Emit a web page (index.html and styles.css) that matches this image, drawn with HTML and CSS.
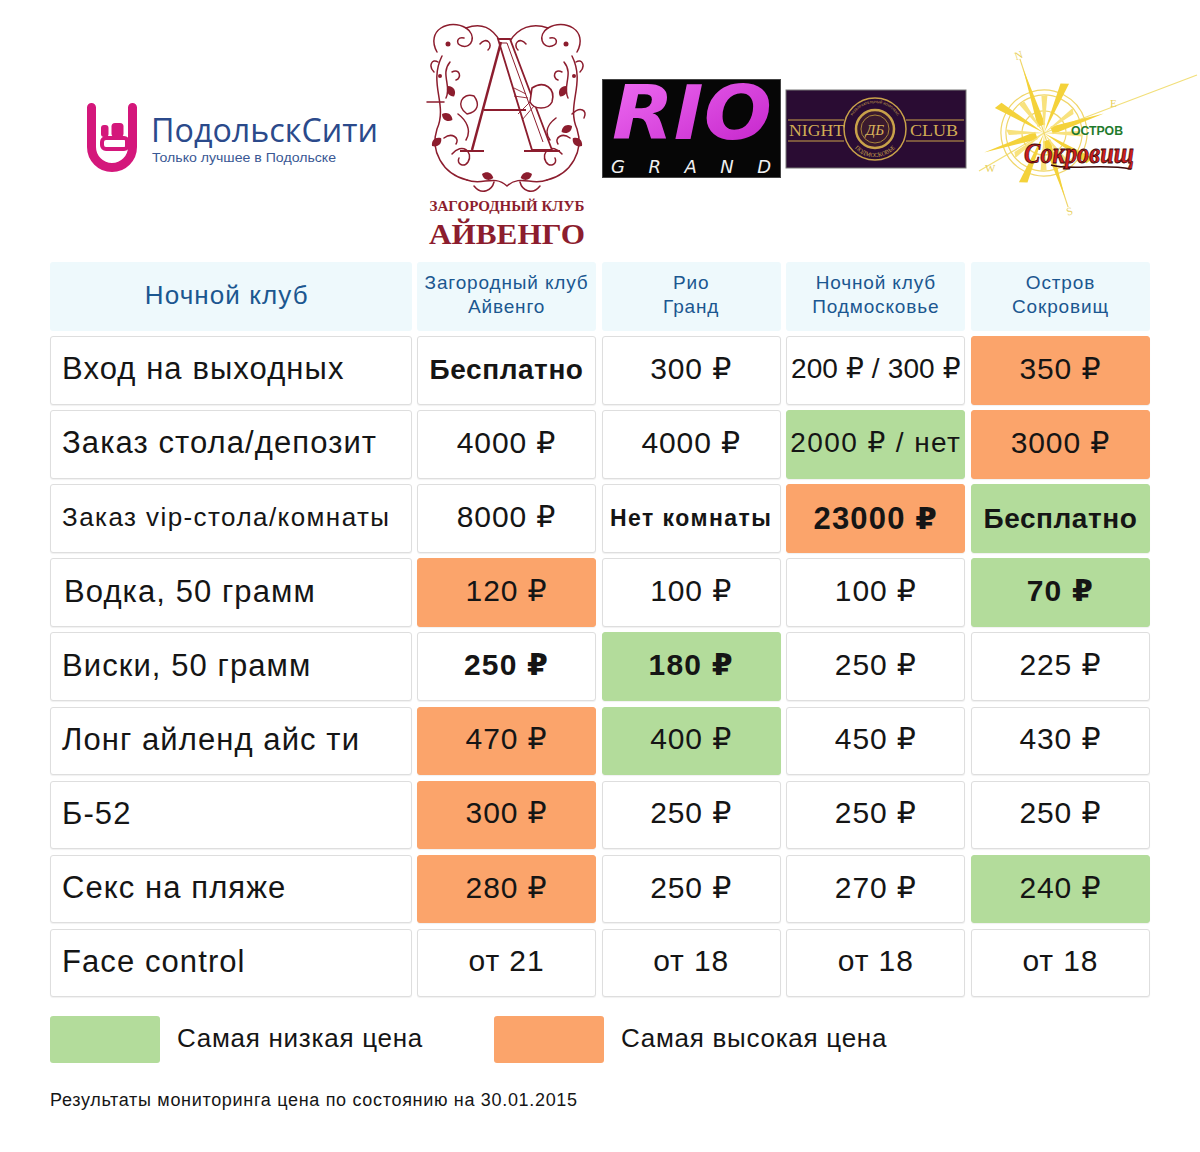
FILE: index.html
```html
<!DOCTYPE html>
<html lang="ru">
<head>
<meta charset="utf-8">
<title>Сравнение ночных клубов</title>
<link rel="stylesheet" href="styles.css">
</head>
<body>
<div class="page">
  <div class="logos">
    <div class="logo logo-podolsk">
      <svg width="300" height="75" viewBox="0 0 300 75">
        <g transform="translate(3,3)" fill="none" stroke="#d4177b">
          <path d="M4.5 4.5 V44 A20.5 20.5 0 0 0 45.5 44 V4.5" stroke-width="9" stroke-linecap="round"/>
          <rect x="15" y="35" width="26" height="11" rx="4" stroke-width="4" fill="#fff"/>
        </g>
        <g transform="translate(3,3)" fill="#d4177b">
          <rect x="14" y="22" width="7.5" height="12" rx="3"/>
          <rect x="24.5" y="20" width="12" height="14" rx="3.5"/>
          <rect x="38" y="35" width="6" height="11"/>
        </g>
        <text x="67" y="42" class="pd-title" textLength="227" lengthAdjust="spacingAndGlyphs">ПодольскСити</text>
        <text x="68" y="62" class="pd-sub" textLength="184" lengthAdjust="spacingAndGlyphs">Только лучшее в Подольске</text>
      </svg>
    </div>
    <div class="logo logo-ivanhoe">
      <svg width="170" height="236" viewBox="0 0 170 236">
        <defs>
          <path id="leaf" d="M0 0 C3 -5 9 -5 12 0 C9 5 3 5 0 0 Z"/>
        </defs>
        <g fill="none" stroke="#8c1d2e" stroke-width="1.5" stroke-linecap="round">
          <path d="M15 38 C3 16 28 4 44 14 C55 21 50 35 40 32 C33 30 35 22 42 24"/>
          <path d="M155 38 C167 16 142 4 126 14 C115 21 120 35 130 32 C137 30 135 22 128 24"/>
          <path d="M44 14 C60 8 70 14 78 27"/>
          <path d="M126 14 C110 8 96 14 88 27"/>
          <path d="M58 30 C64 22 72 30 66 36 M104 30 C98 22 90 30 96 36"/>
          <path d="M20 42 C6 70 26 90 15 115 C8 136 20 160 45 166"/>
          <path d="M150 42 C164 70 144 90 155 115 C162 136 150 160 125 166"/>
          <path d="M28 48 C18 60 30 72 24 84 M30 58 C38 54 40 64 34 66"/>
          <path d="M142 48 C152 60 140 72 146 84 M140 58 C132 54 130 64 136 66"/>
          <path d="M12 58 C6 52 10 44 16 48 M158 58 C164 52 160 44 154 48"/>
          <path d="M45 166 C60 172 72 160 85 172 C98 160 110 172 125 166"/>
          <path d="M30 140 C40 128 52 138 46 148 C42 154 34 150 37 144"/>
          <path d="M140 140 C130 128 118 138 124 148 C128 154 136 150 133 144"/>
          <path d="M22 124 C30 118 38 124 34 130 M148 124 C140 118 132 124 136 130"/>
          <path d="M52 172 C60 182 70 176 72 168 M118 172 C110 182 100 176 98 168"/>
          <path d="M5 88 L22 88"/>
          <path d="M150 100 C158 92 166 96 162 104"/>
          <path d="M36 100 C44 106 50 116 44 126 M134 104 C126 110 122 118 128 126"/>
        </g>
        <g fill="#8c1d2e">
          <use href="#leaf" transform="translate(26 72) rotate(60)"/>
          <use href="#leaf" transform="translate(144 72) rotate(120)"/>
          <use href="#leaf" transform="translate(20 100) rotate(30)"/>
          <use href="#leaf" transform="translate(150 112) rotate(150)"/>
          <use href="#leaf" transform="translate(10 132) rotate(-40)"/>
          <use href="#leaf" transform="translate(160 132) rotate(220)"/>
          <use href="#leaf" transform="translate(60 160) rotate(20)"/>
          <use href="#leaf" transform="translate(110 160) rotate(160)"/>
          <circle cx="26" cy="30" r="2.5"/>
          <circle cx="144" cy="30" r="2.5"/>
          <circle cx="18" cy="62" r="2"/>
          <circle cx="152" cy="62" r="2"/>
        </g>
        <path d="M45 100 C33 92 40 78 52 82 C58 90 56 98 45 100 Z" fill="#fff" stroke="#8c1d2e" stroke-width="1.4"/>
        <path d="M76 25 L88 25 L130 136 L110 136 Z" fill="#fff" stroke="#8c1d2e" stroke-width="1.8"/>
        <path d="M80 29 L85 29 L121 128" stroke="#8c1d2e" stroke-width="1" fill="none"/>
        <path d="M79 28 L50 136" stroke="#8c1d2e" stroke-width="2.5" fill="none"/>
        <path d="M62 96 L104 96" stroke="#8c1d2e" stroke-width="2" fill="none"/>
        <path d="M38 137 L62 137 M102 137 L138 137" stroke="#8c1d2e" stroke-width="2.2" fill="none"/>
        <path d="M110 74 C122 66 134 74 130 88 C126 96 112 96 108 88 Z" fill="#fff" stroke="#8c1d2e" stroke-width="1.6"/>
        <path d="M108 88 L96 100 M112 92 L100 106 M104 80 L92 74 M106 84 L92 82" stroke="#8c1d2e" stroke-width="0.9" fill="none"/>
        <text x="85" y="197" class="iv-sub" text-anchor="middle" textLength="155" lengthAdjust="spacingAndGlyphs">ЗАГОРОДНЫЙ КЛУБ</text>
        <text x="85" y="230" class="iv-title" text-anchor="middle" textLength="156" lengthAdjust="spacingAndGlyphs">АЙВЕНГО</text>
      </svg>
    </div>
    <div class="logo logo-rio">
      <svg width="179" height="99" viewBox="0 0 179 99">
        <defs>
          <linearGradient id="rioG" x1="0" y1="0" x2="1" y2="1">
            <stop offset="0" stop-color="#f070f4"/>
            <stop offset="1" stop-color="#c21fc8"/>
          </linearGradient>
        </defs>
        <rect x="0.5" y="0.5" width="178" height="98" fill="#060606" stroke="#444"/>
        <text x="10" y="60" class="rio-title" fill="url(#rioG)" textLength="160" lengthAdjust="spacingAndGlyphs">RIO</text>
        <text x="9" y="94" class="rio-sub" textLength="160" lengthAdjust="spacing">GRAND</text>
      </svg>
    </div>
    <div class="logo logo-night">
      <svg width="180" height="78" viewBox="0 0 180 78">
        <defs>
          <path id="arcTop" d="M63 39 A26 26 0 0 1 115 39"/>
          <path id="arcBot" d="M62 40 A27 27 0 0 0 116 40"/>
        </defs>
        <rect x="0" y="0" width="180" height="78" fill="#2a0c33" stroke="#777" stroke-width="1"/>
        <g stroke="#c9a24a" stroke-width="1.2">
          <line x1="2" y1="30" x2="58" y2="30"/>
          <line x1="2" y1="51" x2="58" y2="51"/>
          <line x1="120" y1="30" x2="178" y2="30"/>
          <line x1="120" y1="51" x2="178" y2="51"/>
        </g>
        <circle cx="89" cy="39" r="31" fill="#2a0c33" stroke="#c9a24a" stroke-width="1.5"/>
        <circle cx="89" cy="39" r="19" fill="#3a1a2e" stroke="#c9a24a" stroke-width="2.5"/>
        <circle cx="89" cy="39" r="14" fill="none" stroke="#a8843a" stroke-width="1"/>
        <text class="nc-small"><textPath href="#arcTop" startOffset="50%" text-anchor="middle">РАЗВЛЕКАТЕЛЬНЫЙ КОМПЛЕКС</textPath></text>
        <text class="nc-small2"><textPath href="#arcBot" startOffset="50%" text-anchor="middle">ПОДМОСКОВЬЕ</textPath></text>
        <text x="89" y="45" class="nc-mono" text-anchor="middle">ДБ</text>
        <text x="3" y="46" class="nc-text" textLength="55" lengthAdjust="spacingAndGlyphs">NIGHT</text>
        <text x="124" y="46" class="nc-text" textLength="48" lengthAdjust="spacingAndGlyphs">CLUB</text>
      </svg>
    </div>
    <div class="logo logo-ostrov">
      <svg width="230" height="180" viewBox="0 0 230 180">
        <g stroke="#f2df7a" stroke-width="1.2" fill="none">
          <line x1="8" y1="128" x2="73" y2="90"/>
          <line x1="73" y1="90" x2="226" y2="32"/>
        </g>
        <g transform="rotate(-18 73 90)">
          <g fill="none" stroke="#f0d66a" stroke-width="1.2">
            <circle cx="73" cy="90" r="43"/>
            <circle cx="73" cy="90" r="38"/>
            <circle cx="73" cy="90" r="22"/>
            <line x1="73" y1="12" x2="73" y2="168"/>
          </g>
          <g fill="#f4d23a">
            <polygon points="73,22 69,82 77,82"/>
            <polygon points="73,158 69,98 77,98"/>
            <polygon points="10,90 65,86 65,94"/>
            <polygon points="136,90 81,86 81,94"/>
            <polygon points="73,90 34,51 42,48"/>
            <polygon points="73,90 112,51 104,48"/>
            <polygon points="73,90 34,129 42,132"/>
            <polygon points="73,90 112,129 104,132"/>
          </g>
          <g fill="#f8e27e">
            <polygon points="73,90 58,55 64,54"/>
            <polygon points="73,90 88,55 82,54"/>
            <polygon points="73,90 58,125 64,126"/>
            <polygon points="73,90 88,125 82,126"/>
            <polygon points="73,90 38,75 39,81"/>
            <polygon points="73,90 108,75 107,81"/>
            <polygon points="73,90 38,105 39,99"/>
            <polygon points="73,90 108,105 107,99"/>
          </g>
          <text x="73" y="12" class="cp-letter" text-anchor="middle">N</text>
          <text x="73" y="176" class="cp-letter" text-anchor="middle">S</text>
        </g>
        <text x="139" y="64" class="cp-letter">E</text>
        <text x="14" y="129" class="cp-letter">W</text>
        <text x="100" y="92" class="os-top" textLength="52" lengthAdjust="spacingAndGlyphs">ОСТРОВ</text>
        <path d="M80 122 C100 128 130 120 160 126" stroke="#3a0a0a" stroke-width="1.5" fill="none"/>
        <text x="53" y="120" class="os-title" textLength="110" lengthAdjust="spacingAndGlyphs">Сокровищ</text>
      </svg>
    </div>
  </div>

  <div class="table">
    <div class="cell head head-main">Ночной клуб</div>
    <div class="cell head">Загородный клуб<br>Айвенго</div>
    <div class="cell head">Рио<br>Гранд</div>
    <div class="cell head">Ночной клуб<br>Подмосковье</div>
    <div class="cell head">Остров<br>Сокровищ</div>

    <div class="cell label">Вход на выходных</div>
    <div class="cell val strong s28">Бесплатно</div>
    <div class="cell val">300 ₽</div>
    <div class="cell val s28n tight">200 ₽ / 300 ₽</div>
    <div class="cell val high">350 ₽</div>

    <div class="cell label">Заказ стола/депозит</div>
    <div class="cell val">4000 ₽</div>
    <div class="cell val">4000 ₽</div>
    <div class="cell val low s28n wide">2000 ₽ / нет</div>
    <div class="cell val high">3000 ₽</div>

    <div class="cell label small">Заказ vip-стола/комнаты</div>
    <div class="cell val">8000 ₽</div>
    <div class="cell val strong s23">Нет комнаты</div>
    <div class="cell val high strong s31">23000 ₽</div>
    <div class="cell val low strong s28">Бесплатно</div>

    <div class="cell label indent">Водка, 50 грамм</div>
    <div class="cell val high">120 ₽</div>
    <div class="cell val">100 ₽</div>
    <div class="cell val">100 ₽</div>
    <div class="cell val low strong">70 ₽</div>

    <div class="cell label">Виски, 50 грамм</div>
    <div class="cell val strong">250 ₽</div>
    <div class="cell val low strong">180 ₽</div>
    <div class="cell val">250 ₽</div>
    <div class="cell val">225 ₽</div>

    <div class="cell label">Лонг айленд айс ти</div>
    <div class="cell val high">470 ₽</div>
    <div class="cell val low">400 ₽</div>
    <div class="cell val">450 ₽</div>
    <div class="cell val">430 ₽</div>

    <div class="cell label">Б-52</div>
    <div class="cell val high">300 ₽</div>
    <div class="cell val">250 ₽</div>
    <div class="cell val">250 ₽</div>
    <div class="cell val">250 ₽</div>

    <div class="cell label">Секс на пляже</div>
    <div class="cell val high">280 ₽</div>
    <div class="cell val">250 ₽</div>
    <div class="cell val">270 ₽</div>
    <div class="cell val low">240 ₽</div>

    <div class="cell label">Face control</div>
    <div class="cell val">от 21</div>
    <div class="cell val">от 18</div>
    <div class="cell val">от 18</div>
    <div class="cell val">от 18</div>
  </div>

  <div class="legend">
    <div class="legend-item"><span class="swatch low"></span><span class="legend-text">Самая низкая цена</span></div>
    <div class="legend-item"><span class="swatch high"></span><span class="legend-text">Самая высокая цена</span></div>
  </div>

  <p class="note">Результаты мониторинга цена по состоянию на 30.01.2015</p>
</div>
</body>
</html>
```

FILE: styles.css
```css
html, body {
  margin: 0;
  padding: 0;
  background: #fff;
  overflow-x: hidden;
}

body {
  font-family: "Liberation Sans", Arial, "DejaVu Sans", sans-serif;
  color: #151515;
}

.page {
  width: 1100px;
  padding: 0 50px;
}

.logos {
  display: grid;
  grid-template-columns: 361.5px repeat(4, minmax(0, 1fr));
  column-gap: 5.5px;
  height: 262px;
  align-items: center;
}

.logo {
  min-width: 0;
}

.logo svg {
  display: block;
  overflow: visible;
}

.logo-podolsk {
  justify-self: center;
  margin-top: 12px;
  margin-left: 6px;
}

.logo-ivanhoe {
  justify-self: center;
  margin-top: 2px;
}

.logo-rio {
  margin-top: -6px;
}

.logo-night {
  margin-top: -4px;
}

.logo-ostrov {
  justify-self: start;
  margin-left: 0;
  margin-top: 4px;
}

.pd-title {
  font-family: "Open Sans", "Liberation Sans", sans-serif;
  font-size: 33px;
  fill: #2b4a8b;
}

.pd-sub {
  font-family: "Liberation Sans", sans-serif;
  font-size: 13px;
  fill: #3a5894;
}

.iv-sub {
  font-family: "Liberation Serif", serif;
  font-size: 14px;
  font-weight: bold;
  fill: #8c1d2e;
}

.iv-title {
  font-family: "Liberation Serif", serif;
  font-size: 30px;
  font-weight: bold;
  fill: #8c1d2e;
}

.rio-title {
  font-family: "DejaVu Sans", sans-serif;
  font-weight: bold;
  font-style: italic;
  font-size: 74px;
}

.rio-sub {
  font-family: "DejaVu Sans", sans-serif;
  font-style: italic;
  font-size: 18px;
  fill: #f0f0f0;
}

.nc-text {
  font-family: "Liberation Serif", serif;
  font-size: 17px;
  fill: #d2ac55;
}

.nc-small {
  font-family: "Liberation Sans", sans-serif;
  font-size: 3.4px;
  fill: #c9a24a;
}

.nc-small2 {
  font-family: "Liberation Serif", serif;
  font-size: 6px;
  fill: #c9a24a;
}

.nc-mono {
  font-family: "Liberation Serif", serif;
  font-style: italic;
  font-size: 15px;
  fill: #d8b25a;
}

.cp-letter {
  font-family: "Liberation Serif", serif;
  font-size: 11px;
  fill: #e8cf5a;
}

.os-top {
  font-family: "Liberation Sans", sans-serif;
  font-weight: bold;
  font-size: 13px;
  fill: #1f7a2c;
}

.os-title {
  font-family: "Liberation Serif", serif;
  font-weight: bold;
  font-style: italic;
  font-size: 30px;
  fill: #d01d1d;
  stroke: #3a0808;
  stroke-width: 0.8;
}

.table {
  display: grid;
  grid-template-columns: 361.5px repeat(4, minmax(0, 1fr));
  grid-auto-rows: 68.6px;
  column-gap: 5.5px;
  row-gap: 5.5px;
}

.cell {
  box-sizing: border-box;
  display: flex;
  align-items: center;
  justify-content: center;
  text-align: center;
  border-radius: 3px;
  white-space: nowrap;
}

.head {
  background: #eef9fc;
  color: #1b5790;
  font-size: 19px;
  line-height: 24px;
  letter-spacing: 0.045em;
  padding-bottom: 2px;
}

.head-main {
  font-size: 26px;
  letter-spacing: 0.042em;
  padding-right: 8px;
}

.label,
.val {
  background: #fff;
  border: 1px solid #dedede;
  box-shadow: 0 1px 1px rgba(0, 0, 0, 0.06);
}

.label {
  justify-content: flex-start;
  padding-left: 11px;
  font-size: 31px;
  letter-spacing: 0.035em;
  padding-bottom: 2px;
}

.label.small {
  font-size: 26px;
  letter-spacing: 0.055em;
}

.label.indent {
  padding-left: 13px;
}

.val {
  font-size: 30px;
  letter-spacing: 0.03em;
  padding-bottom: 4px;
}

.strong {
  font-weight: bold;
  letter-spacing: 0.04em;
}

.s28 {
  font-size: 28px;
  letter-spacing: 0.02em;
  padding-bottom: 0;
}

.s28n {
  font-size: 28px;
}

.tight {
  letter-spacing: 0.005em;
}

.wide {
  letter-spacing: 0.05em;
}

.s23 {
  font-size: 23px;
  letter-spacing: 0.063em;
  padding-bottom: 0;
}

.s31 {
  font-size: 31px;
  letter-spacing: 0.037em;
  padding-bottom: 0;
}

.val.low {
  background: #b3dc9b;
  border-color: #b3dc9b;
}

.val.high {
  background: #fba46b;
  border-color: #fba46b;
}

.legend {
  display: flex;
  margin-top: 19px;
}

.legend-item {
  display: flex;
  align-items: center;
  width: 444px;
}

.swatch {
  display: block;
  width: 110px;
  height: 47px;
  border-radius: 3px;
  margin-right: 17px;
}

.swatch.low {
  background: #b3dc9b;
}

.swatch.high {
  background: #fba46b;
}

.legend-text {
  font-size: 26px;
  letter-spacing: 0.028em;
  padding-bottom: 2px;
}

.note {
  margin: 27px 0 0;
  font-size: 18px;
  letter-spacing: 0.038em;
}
```
